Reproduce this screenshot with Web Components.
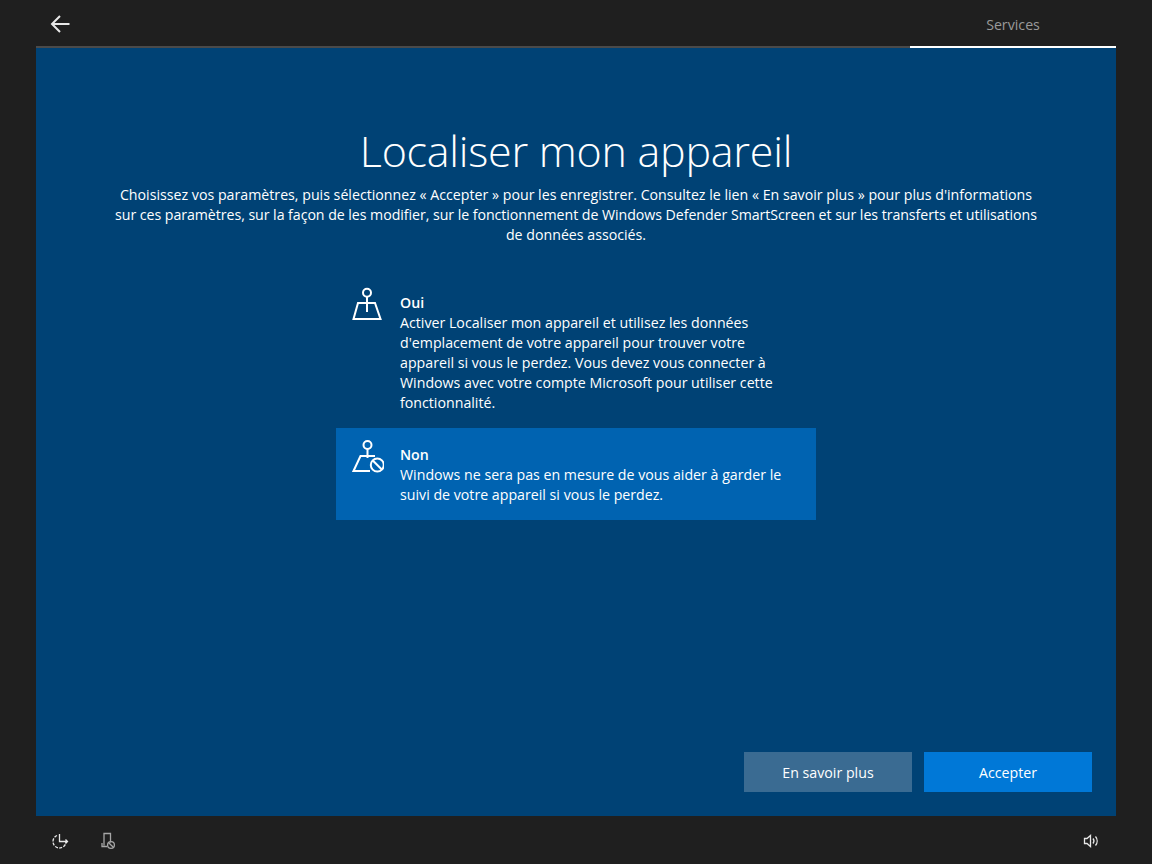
<!DOCTYPE html>
<html lang="fr">
<head>
<meta charset="utf-8">
<title>Localiser mon appareil</title>
<style>
  html, body { margin: 0; height: 100%; background: #1f1f1f; }
  body { font-family: "Open Sans", "Noto Sans", sans-serif; color: #fff; }
</style>
</head>
<body>
<oobe-shell>
  <oobe-header slot="header" label="Services"></oobe-header>
  <oobe-page>
    <span slot="title">Localiser mon appareil</span>
    <span slot="intro">Choisissez vos paramètres, puis sélectionnez « Accepter » pour les enregistrer. Consultez le lien « En savoir plus » pour plus d'informations<br><span style="letter-spacing: -0.055px">sur ces paramètres, sur la façon de les modifier, sur le fonctionnement de Windows Defender SmartScreen et sur les transferts et utilisations</span><br>de données associés.</span>
    <oobe-option slot="options" heading="Oui">
      <svg slot="icon" width="32" height="40" viewBox="0 0 32 40" fill="none" stroke="currentColor" stroke-width="2">
        <circle cx="15" cy="8.700" r="4"/>
        <path d="M15 12.700V28M6 19h17l5.500 16H1.500z"/>
      </svg>
      Activer Localiser mon appareil et utilisez les données d'emplacement de votre appareil pour trouver votre appareil si vous le perdez. Vous devez vous connecter à Windows avec votre compte Microsoft pour utiliser cette fonctionnalité.
    </oobe-option>
    <oobe-option slot="options" heading="Non" selected>
      <svg slot="icon" width="32" height="40" viewBox="0 0 32 40" fill="none" stroke="currentColor" stroke-width="2">
        <circle cx="15.500" cy="9" r="4"/>
        <path d="M15.500 13v9M23 20H8.500L1.500 35H18"/>
        <circle cx="25.300" cy="29" r="6.500"/>
        <path d="M20.800 24.500l9 9"/>
      </svg>
      Windows ne sera pas en mesure de vous aider à garder le suivi de votre appareil si vous le perdez.
    </oobe-option>
    <oobe-button slot="actions" tone="secondary">En savoir plus</oobe-button>
    <oobe-button slot="actions" tone="primary">Accepter</oobe-button>
  </oobe-page>
  <oobe-status slot="status"></oobe-status>
</oobe-shell>

<script>
  class OobeShell extends HTMLElement {
    constructor() {
      super();
      const shadow = this.attachShadow({ mode: 'open' });
      shadow.innerHTML = `
        <style>
          :host { display: grid; grid-template-rows: 48px 768px 48px; width: 1152px; height: 864px; padding: 0 36px; box-sizing: border-box; }
        </style>
        <slot name="header"></slot>
        <slot></slot>
        <slot name="status"></slot>
      `;
    }
  }

  class OobeHeader extends HTMLElement {
    constructor() {
      super();
      const shadow = this.attachShadow({ mode: 'open' });
      shadow.innerHTML = `
        <style>
          :host { display: flex; justify-content: space-between; height: 48px; box-sizing: border-box; border-bottom: 2px solid #4a4a4a; }
          button { all: unset; display: flex; align-items: center; padding: 0 0 0 14px; height: 48px; color: #e8e8e8; }
          .tab { width: 206px; height: 48px; box-sizing: border-box; margin-bottom: -2px; border-bottom: 2px solid #fff; text-align: center; line-height: 49px; font-size: 14.200px; color: #9a9a9a; }
        </style>
        <button aria-label="Retour">
          <svg width="20" height="20" viewBox="0 0 20 20" fill="none" stroke="currentColor" stroke-width="2">
            <path d="M19.500 10H2M10 2l-8 8 8 8"/>
          </svg>
        </button>
        <div class="tab"></div>
      `;
      shadow.querySelector('.tab').textContent = this.getAttribute('label');
    }
  }

  class OobePage extends HTMLElement {
    constructor() {
      super();
      const shadow = this.attachShadow({ mode: 'open' });
      shadow.innerHTML = `
        <style>
          :host { display: flex; flex-direction: column; background: #004275; height: 768px; }
          h1 { margin: 72px 0 0; height: 64px; line-height: 62px; text-align: center; font-size: 43px; letter-spacing: -0.250px; font-weight: 300; }
          p { margin: 1px 0 0; line-height: 20px; font-size: 14.200px; text-align: center; }
          .options { margin: 31px 0 0 300px; width: 480px; display: flex; flex-direction: column; }
          .actions { margin-top: auto; padding: 0 24px 24px 0; display: flex; justify-content: flex-end; gap: 12px; }
        </style>
        <h1><slot name="title"></slot></h1>
        <p><slot name="intro"></slot></p>
        <div class="options"><slot name="options"></slot></div>
        <div class="actions"><slot name="actions"></slot></div>
      `;
    }
  }

  class OobeOption extends HTMLElement {
    constructor() {
      super();
      const shadow = this.attachShadow({ mode: 'open' });
      shadow.innerHTML = `
        <style>
          :host { display: flex; gap: 16px; padding: 17px 32px 15px 16px; font-size: 14.200px; line-height: 20px; }
          :host([selected]) { background: #0063b1; }
          .icon { width: 32px; height: 20px; }
          ::slotted(svg) { display: block; margin-top: -9px; }
          strong { display: block; font-weight: 600; }
        </style>
        <div class="icon"><slot name="icon"></slot></div>
        <div><strong></strong><slot></slot></div>
      `;
      shadow.querySelector('strong').textContent = this.getAttribute('heading');
    }
  }

  class OobeButton extends HTMLElement {
    constructor() {
      super();
      const shadow = this.attachShadow({ mode: 'open' });
      shadow.innerHTML = `
        <style>
          :host { display: flex; align-items: center; justify-content: center; width: 168px; height: 40px; font-size: 14.200px; }
          :host([tone="secondary"]) { background: #3a6b92; }
          :host([tone="primary"]) { background: #0078d7; }
        </style>
        <slot></slot>
      `;
    }
  }

  class OobeStatus extends HTMLElement {
    constructor() {
      super();
      const shadow = this.attachShadow({ mode: 'open' });
      shadow.innerHTML = `
        <style>
          :host { display: flex; align-items: center; gap: 28px; height: 48px; padding: 0 14px; box-sizing: border-box; color: #e8e8e8; }
          svg { display: block; }
          .end { margin-left: auto; }
          .mic { color: #a6a6a6; }
        </style>
        <svg width="20" height="20" viewBox="0 0 20 20" fill="none" stroke="currentColor" stroke-width="1.300">
          <path d="M7 5.500a6.500 6.500 0 1 0 9 6" stroke-dasharray="3 1.300"/>
          <path d="M9.500 4v7.500h8M15.500 9.500l2 2-2 2"/>
        </svg>
        <svg class="mic" width="20" height="20" viewBox="0 0 20 20" fill="none" stroke="currentColor" stroke-width="1.300">
          <path d="M6 15.500V3.500h6.500v9M4 13v3.500h5"/>
          <circle cx="13" cy="15" r="3.400"/>
          <path d="M10.700 12.700l4.600 4.600"/>
        </svg>
        <svg class="end" width="20" height="20" viewBox="0 0 20 20" fill="none" stroke="currentColor" stroke-width="1.300">
          <path d="M2.500 8.500H5L8.500 5.500v11L5 13.500H2.500z"/>
          <path d="M11 8.500a4 4 0 0 1 0 5M13.500 6.500a7 7 0 0 1 0 9"/>
        </svg>
      `;
    }
  }

  customElements.define('oobe-shell', OobeShell);
  customElements.define('oobe-header', OobeHeader);
  customElements.define('oobe-page', OobePage);
  customElements.define('oobe-option', OobeOption);
  customElements.define('oobe-button', OobeButton);
  customElements.define('oobe-status', OobeStatus);
</script>
</body>
</html>
